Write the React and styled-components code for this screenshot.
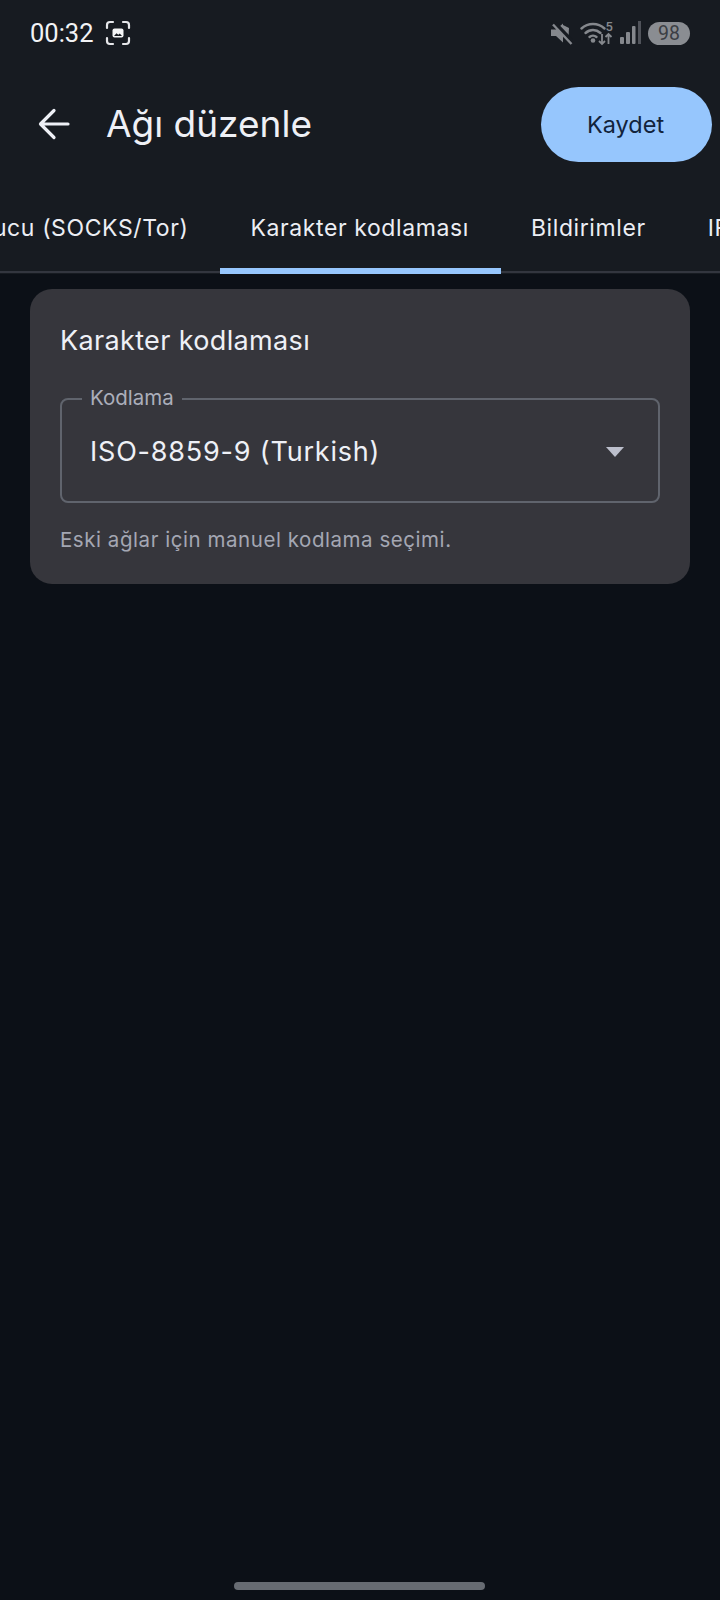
import React from "react";
import styled, { createGlobalStyle } from "styled-components";

const GlobalStyle = createGlobalStyle`
  html, body {
    margin: 0;
    padding: 0;
    background: #0c1017;
  }
  * {
    box-sizing: border-box;
  }
`;

const Page = styled.div`
  width: 720px;
  height: 1600px;
  display: flex;
  flex-direction: column;
  overflow: hidden;
  background: #0c1017;
  font-family: Inter, "Liberation Sans", sans-serif;
  color: #eef0f6;
`;

const Top = styled.div`
  background: #171b21;
`;

const StatusBar = styled.div`
  height: 66px;
  display: flex;
  align-items: center;
  justify-content: space-between;
  padding: 0 30px;
`;

const StatusGroup = styled.div`
  display: flex;
  align-items: center;
  gap: ${({ $gap }) => $gap}px;
`;

const Time = styled.span`
  font-family: Roboto, sans-serif;
  font-size: 25.5px;
  color: #f2f3f5;
`;

const Battery = styled.span`
  width: 42px;
  height: 23px;
  border-radius: 12px;
  display: flex;
  align-items: center;
  justify-content: center;
  background: #8a8d92;
  color: #3b3e44;
  font-family: Roboto, sans-serif;
  font-size: 19.5px;
`;

const Header = styled.div`
  height: 116px;
  display: flex;
  align-items: center;
  padding: 0 8px 0 36px;
`;

const BackButton = styled.button`
  width: 36px;
  height: 36px;
  padding: 0;
  border: none;
  background: none;
  display: flex;
  color: #eef0f6;
`;

const Title = styled.h1`
  margin: -2px 0 0 34px;
  flex: 1;
  font-size: 37px;
  font-weight: 400;
  color: #eef0f6;
`;

const SaveButton = styled.button`
  width: 171px;
  height: 75px;
  padding: 0 2px 0 0;
  border: none;
  border-radius: 38px;
  background: #96c6fd;
  color: #12233b;
  font-family: inherit;
  font-size: 23.5px;
`;

const TabStrip = styled.div`
  height: 92px;
  overflow: hidden;
  position: relative;
  display: flex;
  &::after {
    content: "";
    position: absolute;
    left: 0;
    right: 0;
    bottom: 1px;
    height: 2px;
    background: #33363f;
  }
`;

const TabRow = styled.div`
  display: flex;
  flex-shrink: 0;
  margin-left: -150px;
`;

const Tab = styled.div`
  height: 92px;
  padding: 0 32px 0 30px;
  display: flex;
  align-items: center;
  position: relative;
  white-space: nowrap;
  font-size: 23px;
  letter-spacing: 0.6px;
  color: #eceef4;
  &::after {
    content: "";
    display: ${({ $active }) => ($active ? "block" : "none")};
    position: absolute;
    z-index: 1;
    left: 0;
    right: 0;
    bottom: 0;
    height: 6px;
    background: #96c6fd;
  }
`;

const Main = styled.main`
  padding: 15px 30px 0;
`;

const Card = styled.section`
  height: 295px;
  padding: 37px 30px 0;
  border-radius: 22px;
  background: #36363c;
`;

const CardTitle = styled.h2`
  margin: 0;
  font-size: 27px;
  line-height: 30px;
  letter-spacing: 0.35px;
  font-weight: 400;
  color: #eef0f6;
`;

const Field = styled.div`
  position: relative;
  height: 105px;
  margin-top: 42px;
  padding: 0 34px 0 28px;
  display: flex;
  align-items: center;
  justify-content: space-between;
  border: 2px solid #60646d;
  border-radius: 8px;
`;

const FieldLabel = styled.span`
  position: absolute;
  top: -14px;
  left: 20px;
  padding: 0 8px;
  background: #36363c;
  font-size: 20.5px;
  line-height: 24px;
  color: #abaeba;
`;

const FieldValue = styled.span`
  padding-top: 2px;
  font-size: 27px;
  letter-spacing: 0.8px;
  color: #eef0f6;
`;

const Caret = styled.span`
  width: 0;
  height: 0;
  margin-top: 2px;
  border-left: 9.5px solid transparent;
  border-right: 9.5px solid transparent;
  border-top: 10px solid #bcbfcc;
`;

const Helper = styled.p`
  margin: 24px 0 0;
  font-size: 20.5px;
  line-height: 26px;
  letter-spacing: 0.55px;
  color: #a4a7b3;
`;

const HomeBar = styled.div`
  width: 251px;
  height: 8px;
  margin: auto auto 10px 234px;
  border-radius: 4px;
  background: #676b72;
`;

const ScreenshotIcon = () => (
  <svg width="26" height="26" viewBox="0 0 26 26" fill="none">
    <path
      d="M2 8V5a3 3 0 0 1 3-3h3M18 2h3a3 3 0 0 1 3 3v3M24 18v3a3 3 0 0 1-3 3h-3M8 24H5a3 3 0 0 1-3-3v-3"
      stroke="#e6e7ea"
      strokeWidth="2.2"
      strokeLinecap="round"
    />
    <rect x="7.500" y="8.500" width="11" height="9" rx="2" fill="#f4f5f6" />
    <path d="M9 16l2.500-2.800 1.800 1.500 1.500-1.100 2.200 2.400z" fill="#171b21" />
  </svg>
);

const MuteIcon = () => (
  <svg width="22" height="24" viewBox="0 0 22 24">
    <path d="M0 8.500h5L12 2.500v19l-7-6.500H0z" fill="#85888d" />
    <path d="M12 4l6 3-0.500 9L12 10z" fill="#85888d" />
    <path d="M2 0.500L21.500 21" stroke="#171b21" strokeWidth="4.500" />
    <path d="M2 3.500L20.500 23" stroke="#85888d" strokeWidth="2.400" />
  </svg>
);

const WifiIcon = () => (
  <svg width="33" height="26" viewBox="0 0 33 26" fill="none">
    <g stroke="#85888d" strokeWidth="2.400" strokeLinecap="round">
      <path d="M1.500 8.500C8 2.500 18 2.500 24.500 8.500" />
      <path d="M5.500 13c4.500-4 10.500-4 15 0" />
      <path d="M9.500 17c2-1.800 5-1.800 7 0" />
    </g>
    <circle cx="13" cy="20.500" r="2.300" fill="#85888d" />
    <text x="25.500" y="11" fontFamily="Roboto, sans-serif" fontSize="13" fontWeight="500" fill="#85888d">
      5
    </text>
    <g stroke="#85888d" strokeWidth="1.800">
      <path d="M22 14v10M19 21l3 3 3-3" />
      <path d="M28.500 24V14M25.500 17l3-3 3 3" />
    </g>
  </svg>
);

const SignalIcon = () => (
  <svg width="21" height="24" viewBox="0 0 21 24">
    <rect x="0" y="16" width="4" height="7" rx="1" fill="#85888d" />
    <rect x="6" y="11" width="4" height="12" rx="1" fill="#85888d" />
    <rect x="12" y="5" width="3.500" height="18" rx="1" fill="#85888d" />
    <rect x="18" y="0" width="3" height="23" fill="#50535a" />
  </svg>
);

const BackIcon = () => (
  <svg width="36" height="36" viewBox="0 0 36 36" fill="none">
    <path
      d="M32 18H5M18 4.500L4.500 18 18 31.500"
      stroke="currentColor"
      strokeWidth="3.200"
      strokeLinecap="round"
      strokeLinejoin="round"
    />
  </svg>
);

const tabs = ["Proxy sunucu (SOCKS/Tor)", "Karakter kodlaması", "Bildirimler", "IRCv3"];

export default function App() {
  return (
    <Page>
      <GlobalStyle />
      <Top>
        <StatusBar>
          <StatusGroup $gap={11}>
            <Time>00:32</Time>
            <ScreenshotIcon />
          </StatusGroup>
          <StatusGroup $gap={7}>
            <MuteIcon />
            <WifiIcon />
            <SignalIcon />
            <Battery>98</Battery>
          </StatusGroup>
        </StatusBar>
        <Header>
          <BackButton aria-label="Geri">
            <BackIcon />
          </BackButton>
          <Title>Ağı düzenle</Title>
          <SaveButton>Kaydet</SaveButton>
        </Header>
        <TabStrip>
          <TabRow>
            {tabs.map((tab) => (
              <Tab key={tab} $active={tab === "Karakter kodlaması"}>
                {tab}
              </Tab>
            ))}
          </TabRow>
        </TabStrip>
      </Top>
      <Main>
        <Card>
          <CardTitle>Karakter kodlaması</CardTitle>
          <Field>
            <FieldLabel>Kodlama</FieldLabel>
            <FieldValue>ISO-8859-9 (Turkish)</FieldValue>
            <Caret />
          </Field>
          <Helper>Eski ağlar için manuel kodlama seçimi.</Helper>
        </Card>
      </Main>
      <HomeBar />
    </Page>
  );
}
